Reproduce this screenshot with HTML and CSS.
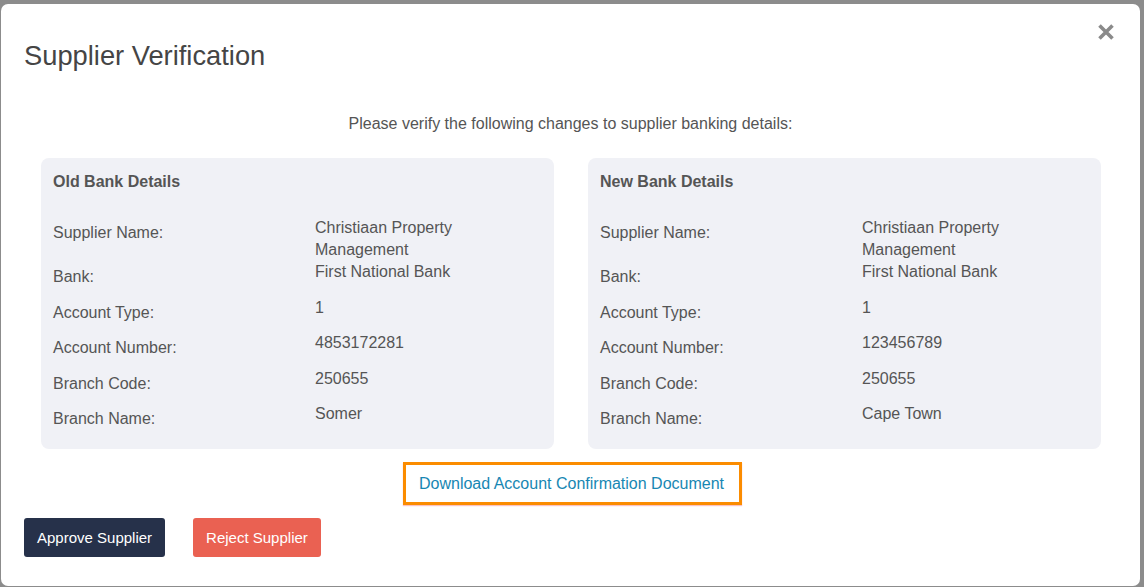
FILE: index.html
```html
<!DOCTYPE html>
<html lang="en">
<head>
<meta charset="utf-8">
<title>Supplier Verification</title>
<link rel="stylesheet" href="styles.css">
</head>
<body>
<div class="modal">
  <div class="modal-header">
    <h1 class="modal-title">Supplier Verification</h1>
    <button class="close" aria-label="Close">
      <svg width="18" height="18" viewBox="0 0 18 18"><path d="M2.5 2.5L15.5 15.5M15.5 2.5L2.5 15.5" stroke="#8a8a8a" stroke-width="3.6" stroke-linecap="butt"/></svg>
    </button>
  </div>
  <p class="intro">Please verify the following changes to supplier banking details:</p>
  <div class="cards">
    <section class="card">
      <h2 class="card-title">Old Bank Details</h2>
      <div class="row"><div class="label">Supplier Name:</div><div class="value">Christiaan Property<br>Management</div></div>
      <div class="row"><div class="label">Bank:</div><div class="value">First National Bank</div></div>
      <div class="row"><div class="label">Account Type:</div><div class="value">1</div></div>
      <div class="row"><div class="label">Account Number:</div><div class="value">4853172281</div></div>
      <div class="row"><div class="label">Branch Code:</div><div class="value">250655</div></div>
      <div class="row"><div class="label">Branch Name:</div><div class="value">Somer</div></div>
    </section>
    <section class="card">
      <h2 class="card-title">New Bank Details</h2>
      <div class="row"><div class="label">Supplier Name:</div><div class="value">Christiaan Property<br>Management</div></div>
      <div class="row"><div class="label">Bank:</div><div class="value">First National Bank</div></div>
      <div class="row"><div class="label">Account Type:</div><div class="value">1</div></div>
      <div class="row"><div class="label">Account Number:</div><div class="value">123456789</div></div>
      <div class="row"><div class="label">Branch Code:</div><div class="value">250655</div></div>
      <div class="row"><div class="label">Branch Name:</div><div class="value">Cape Town</div></div>
    </section>
  </div>
  <div class="download">
    <a class="download-link" href="#">Download Account Confirmation Document</a>
  </div>
  <div class="actions">
    <button class="btn btn-approve">Approve Supplier</button>
    <button class="btn btn-reject">Reject Supplier</button>
  </div>
</div>
</body>
</html>
```
FILE: styles.css
```css
html, body {
  margin: 0;
  padding: 0;
}
body {
  background: #8c8c8c;
  font-family: "Liberation Sans", Arial, sans-serif;
  color: #555555;
  font-size: 16px;
  line-height: 22px;
  padding: 4px 4px 0 1px;
  height: 587px;
  box-sizing: border-box;
  overflow: hidden;
}
.modal {
  width: 1139px;
  height: 582px;
  box-sizing: border-box;
  background: #ffffff;
  border-radius: 7px;
  padding: 0 23px 29px 23px;
  display: flex;
  flex-direction: column;
}
.modal-header {
  display: flex;
  justify-content: space-between;
  align-items: flex-start;
  padding-top: 37px;
}
.modal-title {
  margin: 0;
  font-weight: normal;
  font-size: 27.3px;
  line-height: 30px;
  color: #454545;
}
.close {
  border: 0;
  background: none;
  padding: 0;
  margin: -18px 2px 0 0;
  width: 18px;
  height: 18px;
  cursor: pointer;
}
.close svg {
  display: block;
}
.intro {
  margin: 42px 0 0;
  text-align: center;
  line-height: 22px;
}
.cards {
  display: grid;
  grid-template-columns: 1fr 1fr;
  gap: 34px;
  margin: 23px 16px 0 17px;
}
.card {
  background: #f0f1f6;
  border-radius: 8px;
  padding: 13px 12px 10.5px 12px;
}
.card-title {
  margin: 0 0 24px;
  font-size: 16px;
  line-height: 22px;
  font-weight: bold;
  color: #555555;
}
.row {
  display: grid;
  grid-template-columns: 262px 1fr;
}
.label {
  padding: 5px 0 8.5px;
  line-height: 22px;
}
.value {
  line-height: 22px;
}
.download {
  display: flex;
  justify-content: center;
  margin: 13px 0 0 4px;
}
.download-link {
  display: block;
  border: 3px solid #fb8c00;
  padding: 7.5px 15px 7.5px 13px;
  color: #1787b3;
  text-decoration: none;
  line-height: 22px;
  box-shadow: 0 1px 1px rgba(240, 80, 80, 0.35);
}
.actions {
  display: flex;
  gap: 28px;
  margin-top: 13px;
}
.btn {
  height: 39px;
  padding: 0 13px;
  border: 0;
  border-radius: 3px;
  font-family: "Liberation Sans", Arial, sans-serif;
  font-size: 15px;
  color: #ffffff;
  cursor: pointer;
}
.btn-approve {
  background: #26314a;
}
.btn-reject {
  background: #ea6152;
}
```
